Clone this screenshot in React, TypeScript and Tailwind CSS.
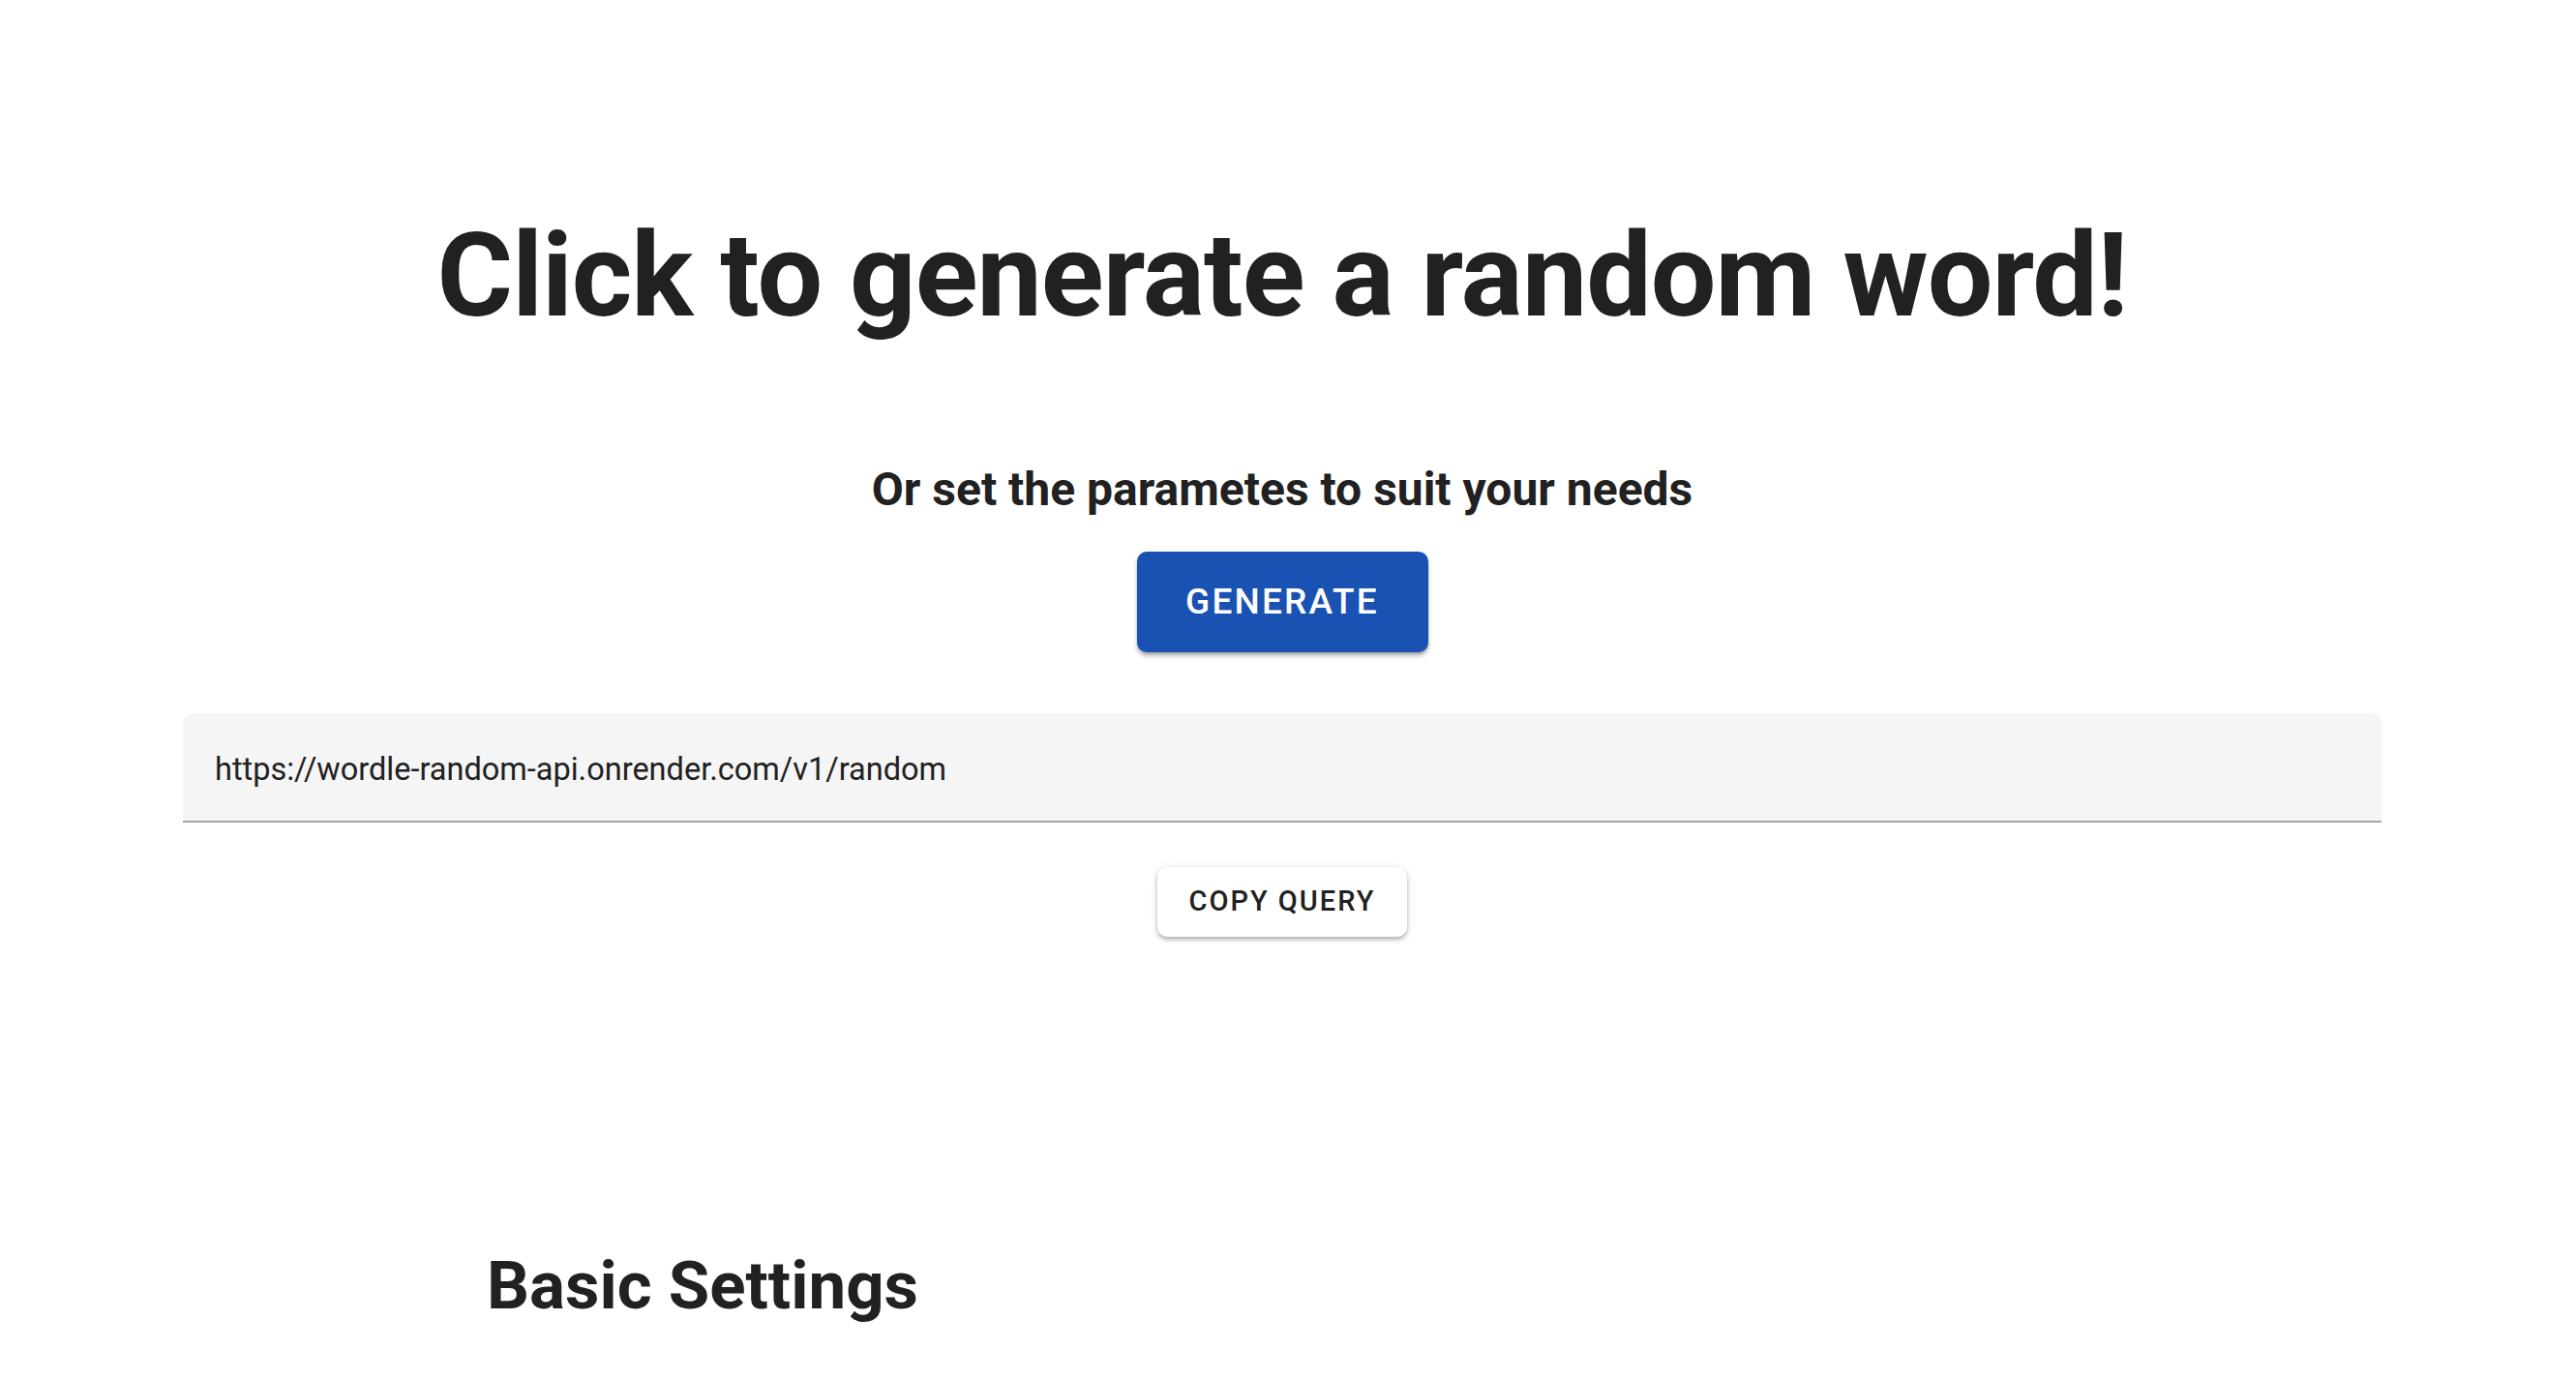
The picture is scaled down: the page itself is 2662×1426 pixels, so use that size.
export default function App() {
  return (
    <main className="min-h-screen bg-white text-[#212121] font-['Roboto',sans-serif] pr-[12px]">
      <div className="flex flex-col items-center pt-[213px]">
        <h1 className="text-[120px] font-bold leading-[1.2] tracking-[-0.95px]">
          Click to generate a random word!
        </h1>

        <h2 className="mt-[120px] text-[48px] font-bold leading-[1.2]">
          Or set the parametes to suit your needs
        </h2>

        <button className="mt-[35px] h-[104px] w-[301px] rounded-[10px] bg-[#1a52b4] text-[37px] font-medium uppercase tracking-[2.2px] text-white shadow-[0_4px_5px_rgba(0,0,0,0.25),0_2px_2px_rgba(0,0,0,0.14)]">
          Generate
        </button>

        {/* query field */}
        <div className="mt-[63px] flex h-[113px] w-[2272px] items-center rounded-t-[10px] border-b-[2px] border-[#a5a5a5] bg-[#f5f5f5] px-[33px] pt-[6px]">
          <span className="text-[32.5px] leading-none">https://wordle-random-api.onrender.com/v1/random</span>
        </div>

        <button className="mt-[46px] h-[72px] w-[258px] rounded-[10px] bg-white text-[29px] font-medium uppercase tracking-[2px] text-[#212121] shadow-[0_3px_4px_rgba(0,0,0,0.25),0_1px_8px_rgba(0,0,0,0.1)]">
          Copy Query
        </button>
      </div>

      <div className="mt-[320px] pl-[503px]">
        <h3 className="text-[69px] font-bold leading-[1.2]">Basic Settings</h3>
      </div>
    </main>
  );
}
